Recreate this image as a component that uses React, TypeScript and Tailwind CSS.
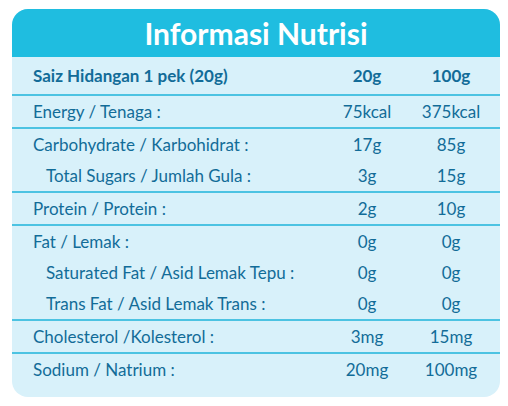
import React from "react";

type Row = { label: string; a: string; b: string; indent?: boolean };

const groups: Row[][] = [
  [{ label: "Energy / Tenaga :", a: "75kcal", b: "375kcal" }],
  [
    { label: "Carbohydrate / Karbohidrat :", a: "17g", b: "85g" },
    { label: "Total Sugars / Jumlah Gula :", a: "3g", b: "15g", indent: true },
  ],
  [{ label: "Protein / Protein :", a: "2g", b: "10g" }],
  [
    { label: "Fat / Lemak :", a: "0g", b: "0g" },
    { label: "Saturated Fat / Asid Lemak Tepu :", a: "0g", b: "0g", indent: true },
    { label: "Trans Fat / Asid Lemak Trans :", a: "0g", b: "0g", indent: true },
  ],
  [{ label: "Cholesterol /Kolesterol :", a: "3mg", b: "15mg" }],
  [{ label: "Sodium / Natrium :", a: "20mg", b: "100mg" }],
];

export default function App() {
  return (
    <div className="w-[508px] h-[406px] bg-white pt-[9px] pl-[12px]" style={{ fontFamily: "Lato, 'Open Sans', sans-serif" }}>
      <div className="w-[488px] h-[388px] rounded-[16px] overflow-hidden bg-[#d8f1fa] flex flex-col">
        <div className="h-[48px] bg-[#1fbde0] flex items-center justify-center">
          <span className="text-white font-bold text-[30px] leading-none">Informasi Nutrisi</span>
        </div>
        <div className="h-[39px] flex items-center border-b-2 border-[#4cc3e2] text-[#126c98] font-bold text-[17px]">
          <span className="pl-[21px] flex-1">Saiz Hidangan 1 pek (20g)</span>
          <span className="w-[84px] text-center">20g</span>
          <span className="w-[84px] text-center mr-[7px]">100g</span>
        </div>
        {groups.map((g, gi) => (
          <div key={gi} className={gi < groups.length - 1 ? "border-b-2 border-[#4cc3e2]" : ""}>
            {g.map((r, ri) => (
              <div key={ri} className="h-[31px] flex items-center text-[#126c98] text-[17px]">
                <span className={`flex-1 ${r.indent ? "pl-[34px]" : "pl-[21px]"}`}>{r.label}</span>
                <span className="w-[84px] text-center">{r.a}</span>
                <span className="w-[84px] text-center mr-[7px]">{r.b}</span>
              </div>
            ))}
          </div>
        ))}
      </div>
    </div>
  );
}
